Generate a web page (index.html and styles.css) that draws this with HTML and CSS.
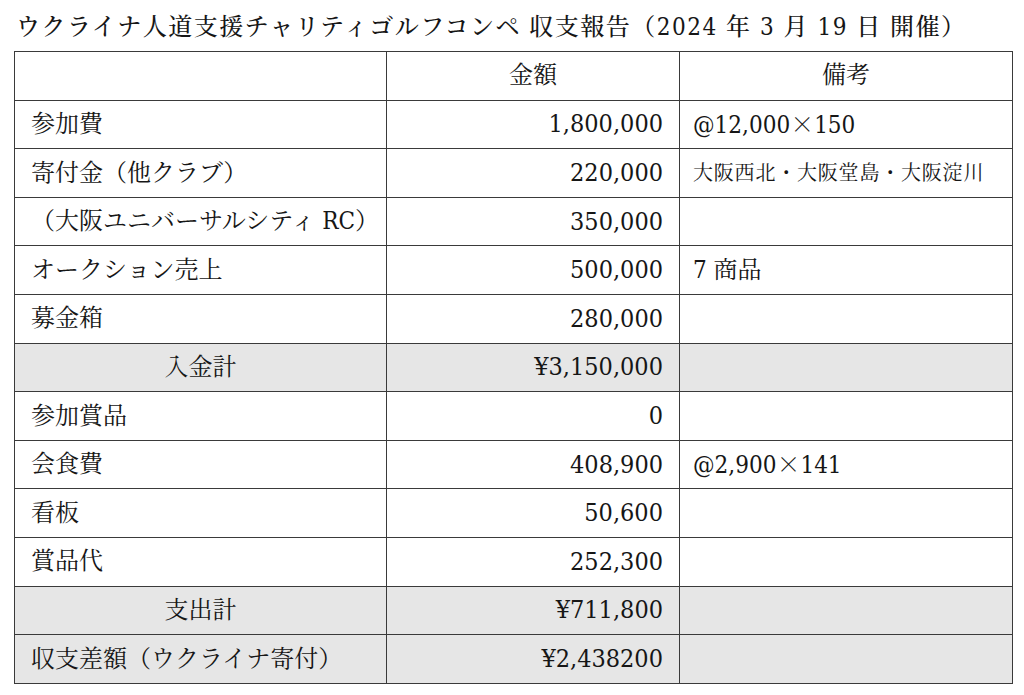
FILE: index.html
```html
<!DOCTYPE html>
<html lang="ja">
<head>
<meta charset="utf-8">
<title>収支報告</title>
<link rel="stylesheet" href="styles.css">
</head>
<body>
<div class="page">
  <h1 class="title">ウクライナ人道支援チャリティゴルフコンペ 収支報告（2024 年 3 月 19 日 開催）</h1>
  <table class="report">
    <colgroup>
      <col class="c-item">
      <col class="c-amount">
      <col class="c-note">
    </colgroup>
    <tr class="head">
      <td></td>
      <td class="center">金額</td>
      <td class="center">備考</td>
    </tr>
    <tr>
      <td>参加費</td>
      <td class="num">1,800,000</td>
      <td class="note">@12,000<span class="cjk">×</span>150</td>
    </tr>
    <tr>
      <td>寄付金（他クラブ）</td>
      <td class="num">220,000</td>
      <td class="note small">大阪西北・大阪堂島・大阪淀川</td>
    </tr>
    <tr>
      <td>（大阪ユニバーサルシティ RC）</td>
      <td class="num">350,000</td>
      <td class="note"></td>
    </tr>
    <tr>
      <td>オークション売上</td>
      <td class="num">500,000</td>
      <td class="note">7 商品</td>
    </tr>
    <tr>
      <td>募金箱</td>
      <td class="num">280,000</td>
      <td class="note"></td>
    </tr>
    <tr class="total">
      <td class="center">入金計</td>
      <td class="num">¥3,150,000</td>
      <td class="note"></td>
    </tr>
    <tr>
      <td>参加賞品</td>
      <td class="num">0</td>
      <td class="note"></td>
    </tr>
    <tr>
      <td>会食費</td>
      <td class="num">408,900</td>
      <td class="note">@2,900<span class="cjk">×</span>141</td>
    </tr>
    <tr>
      <td>看板</td>
      <td class="num">50,600</td>
      <td class="note"></td>
    </tr>
    <tr>
      <td>賞品代</td>
      <td class="num">252,300</td>
      <td class="note"></td>
    </tr>
    <tr class="total">
      <td class="center">支出計</td>
      <td class="num">¥711,800</td>
      <td class="note"></td>
    </tr>
    <tr class="total">
      <td>収支差額（ウクライナ寄付）</td>
      <td class="num">¥2,438200</td>
      <td class="note"></td>
    </tr>
  </table>
</div>
</body>
</html>
```

FILE: styles.css
```css
html, body {
  margin: 0;
  padding: 0;
  background: #ffffff;
}

body {
  font-family: "DejaVu Serif", "Noto Serif CJK JP", "Noto Sans CJK JP", serif;
  font-stretch: condensed;
  color: #161616;
}

.page {
  padding: 0 12px 0 14px;
}

.title {
  margin: 0;
  padding: 3px 0 0 2px;
  height: 48px;
  line-height: 48px;
  font-size: 24px;
  font-weight: 500;
  letter-spacing: 1.5px;
  white-space: nowrap;
}

.report {
  border-collapse: collapse;
  width: 998px;
  table-layout: fixed;
  font-size: 24px;
}

.c-item { width: 372px; }
.c-amount { width: 293px; }
.c-note { width: 333px; }

.report tr {
  height: 48.6px;
}

.report td {
  border: 1.5px solid #3a3a3a;
  padding: 0 16px;
  vertical-align: middle;
  white-space: nowrap;
  line-height: 1.2;
}

.report td.center {
  text-align: center;
}

.report td.num {
  text-align: right;
  font-size: 25px;
}

.report td.note {
  padding-left: 13px;
}

.report td.small {
  font-size: 20px;
  letter-spacing: 0.8px;
}

.cjk {
  font-family: "Noto Serif CJK JP", "Noto Sans CJK JP", serif;
}

.total td {
  background: #e6e6e6;
}
```
